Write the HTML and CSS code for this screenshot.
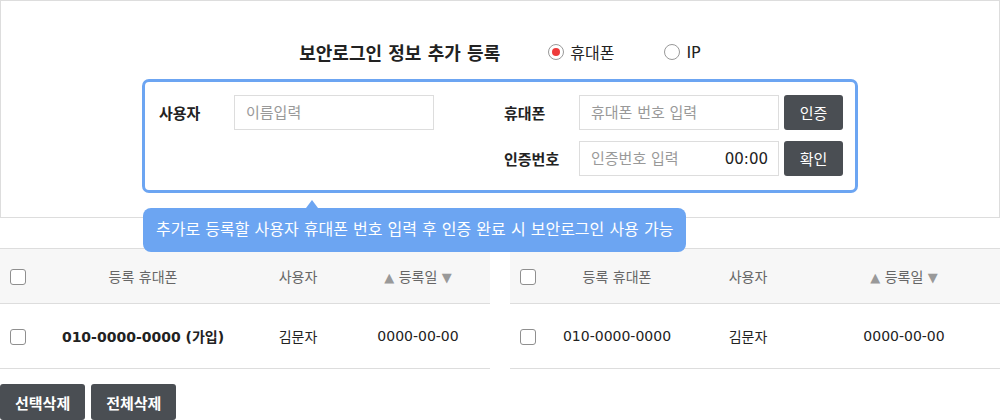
FILE: index.html
```html
<!DOCTYPE html>
<html lang="ko">
<head>
    <meta charset="UTF-8">
    <meta name="viewport" content="width=device-width, initial-scale=1.0">
    <title>보안로그인 정보 추가 등록</title>
    <link rel="stylesheet" href="styles.css">
</head>
<body>
    <!-- 등록 패널 -->
    <div class="reg-panel">
        <div class="reg-title-row">
            <h3 class="reg-title">보안로그인 정보 추가 등록</h3>
            <label class="radio-item">
                <span class="radio-mark checked"></span>
                <span>휴대폰</span>
            </label>
            <label class="radio-item">
                <span class="radio-mark"></span>
                <span>IP</span>
            </label>
        </div>

        <div class="reg-box">
            <div class="field-group">
                <div class="field-row">
                    <span class="field-label">사용자</span>
                    <input class="text-input" type="text" placeholder="이름입력" readonly>
                </div>
            </div>

            <div class="field-group">
                <div class="field-row">
                    <span class="field-label">휴대폰</span>
                    <input class="text-input" type="text" placeholder="휴대폰 번호 입력" readonly>
                    <button class="dark-btn small-btn">인증</button>
                </div>
                <div class="field-row">
                    <span class="field-label">인증번호</span>
                    <div class="code-input">
                        <input type="text" placeholder="인증번호 입력" readonly>
                        <span class="timer">00:00</span>
                    </div>
                    <button class="dark-btn small-btn">확인</button>
                </div>
            </div>

            <div class="reg-tooltip">추가로 등록할 사용자 휴대폰 번호 입력 후 인증 완료 시 보안로그인 사용 가능</div>
        </div>
    </div>

    <!-- 등록 목록 -->
    <div class="list-wrap">
        <table class="list-table list-left">
            <thead>
                <tr>
                    <th class="col-check"><span class="check-box"></span></th>
                    <th class="col-phone">등록 휴대폰</th>
                    <th class="col-user">사용자</th>
                    <th class="col-date"><span class="sort-arrow">▲</span> 등록일 <span class="sort-arrow">▼</span></th>
                </tr>
            </thead>
            <tbody>
                <tr>
                    <td class="col-check"><span class="check-box"></span></td>
                    <td class="col-phone strong">010-0000-0000 (가입)</td>
                    <td class="col-user">김문자</td>
                    <td class="col-date">0000-00-00</td>
                </tr>
            </tbody>
        </table>

        <table class="list-table list-right">
            <thead>
                <tr>
                    <th class="col-check"><span class="check-box"></span></th>
                    <th class="col-phone">등록 휴대폰</th>
                    <th class="col-user">사용자</th>
                    <th class="col-date"><span class="sort-arrow">▲</span> 등록일 <span class="sort-arrow">▼</span></th>
                </tr>
            </thead>
            <tbody>
                <tr>
                    <td class="col-check"><span class="check-box"></span></td>
                    <td class="col-phone">010-0000-0000</td>
                    <td class="col-user">김문자</td>
                    <td class="col-date">0000-00-00</td>
                </tr>
            </tbody>
        </table>
    </div>

    <div class="bottom-actions">
        <button class="dark-btn big-btn">선택삭제</button>
        <button class="dark-btn big-btn">전체삭제</button>
    </div>
</body>
</html>
```

FILE: styles.css
```css
body {
    margin: 0;
    background: #fff;
    font-family: "DejaVu Sans", "Noto Sans CJK KR", sans-serif;
    font-size: 14px;
    color: #222;
}

/* 등록 패널 */
.reg-panel {
    border: 1px solid #ddd;
    padding: 39px 0 24px;
}

.reg-title-row {
    display: flex;
    align-items: center;
    justify-content: center;
    height: 24px;
    margin-bottom: 15px;
}

.reg-title {
    margin: 0 48px 0 0;
    font-size: 18px;
    font-weight: bold;
    color: #222;
}

.radio-item {
    display: flex;
    align-items: center;
    gap: 6px;
    font-size: 16px;
    color: #222;
    cursor: pointer;
}

.radio-item + .radio-item {
    margin-left: 50px;
}

.radio-mark {
    width: 14px;
    height: 14px;
    border: 1px solid #999;
    border-radius: 50%;
    background: #fff;
    position: relative;
}

.radio-mark.checked::after {
    content: "";
    position: absolute;
    top: 3px;
    left: 3px;
    width: 8px;
    height: 8px;
    border-radius: 50%;
    background: #ee3b3b;
}

.reg-box {
    position: relative;
    width: 684px;
    margin: 0 auto;
    padding: 13px 12px 14px 14px;
    border: 3px solid #6ca5f2;
    border-radius: 7px;
    display: flex;
    justify-content: space-between;
}

.field-group {
    display: flex;
    flex-direction: column;
    gap: 11px;
}

.field-row {
    display: flex;
    align-items: center;
}

.field-label {
    width: 75px;
    font-size: 15px;
    font-weight: bold;
    color: #222;
}

.text-input,
.code-input {
    width: 200px;
    height: 35px;
    border: 1px solid #ddd;
    box-sizing: border-box;
    background: #fff;
}

.text-input {
    padding: 0 11px;
    font-family: inherit;
    font-size: 15px;
    color: #222;
}

.text-input::placeholder,
.code-input input::placeholder {
    color: #999;
}

.code-input {
    display: flex;
    align-items: center;
    padding: 0 10px 0 11px;
}

.code-input input {
    flex: 1;
    min-width: 0;
    border: none;
    padding: 0;
    font-family: inherit;
    font-size: 15px;
    outline: none;
}

.timer {
    color: #222;
    font-size: 15px;
}

.dark-btn {
    border: none;
    border-radius: 3px;
    background: #4a4e53;
    color: #fff;
    font-family: inherit;
    cursor: pointer;
}

.small-btn {
    width: 59px;
    height: 35px;
    margin-left: 5px;
    font-size: 15px;
}

/* 말풍선 */
.reg-tooltip {
    position: absolute;
    top: 126px;
    left: -2px;
    height: 44px;
    line-height: 44px;
    padding: 0 13px;
    border-radius: 8px;
    background: #6ca5f2;
    color: #fff;
    font-size: 16px;
    white-space: nowrap;
    z-index: 2;
}

.reg-tooltip::before {
    content: "";
    position: absolute;
    top: -8px;
    left: 163px;
    border-left: 6px solid transparent;
    border-right: 6px solid transparent;
    border-bottom: 8px solid #6ca5f2;
}

/* 목록 */
.list-wrap {
    display: flex;
    gap: 20px;
    margin-top: 30px;
}

.list-table {
    width: 490px;
    border-collapse: collapse;
    table-layout: fixed;
}

.list-table th,
.list-table td {
    padding: 0;
    text-align: center;
    white-space: nowrap;
}

.list-table th {
    height: 54px;
    background: #f7f7f7;
    border-top: 1px solid #ddd;
    border-bottom: 1px solid #ddd;
    font-weight: normal;
    color: #666;
}

.list-table td {
    height: 64px;
    border-bottom: 1px solid #ddd;
    color: #222;
}

.list-table .col-check {
    width: 26px;
    padding-left: 10px;
    text-align: left;
}

.list-table .strong {
    font-weight: bold;
}

.list-left .col-phone { width: 214px; }
.list-left .col-user { width: 96px; }
.list-left .col-date { width: 144px; }

.list-right .col-phone { width: 142px; }
.list-right .col-user { width: 120px; }
.list-right .col-date { width: 192px; }

.check-box {
    display: inline-block;
    width: 14px;
    height: 14px;
    border: 1px solid #8f8f8f;
    border-radius: 3px;
    background: #fff;
    vertical-align: middle;
}

.sort-arrow {
    font-size: 13px;
    color: #999;
}

.bottom-actions {
    display: flex;
    gap: 6px;
    margin-top: 15px;
}

.big-btn {
    height: 36px;
    padding: 0 15px;
    font-size: 15px;
    font-weight: bold;
}
```
